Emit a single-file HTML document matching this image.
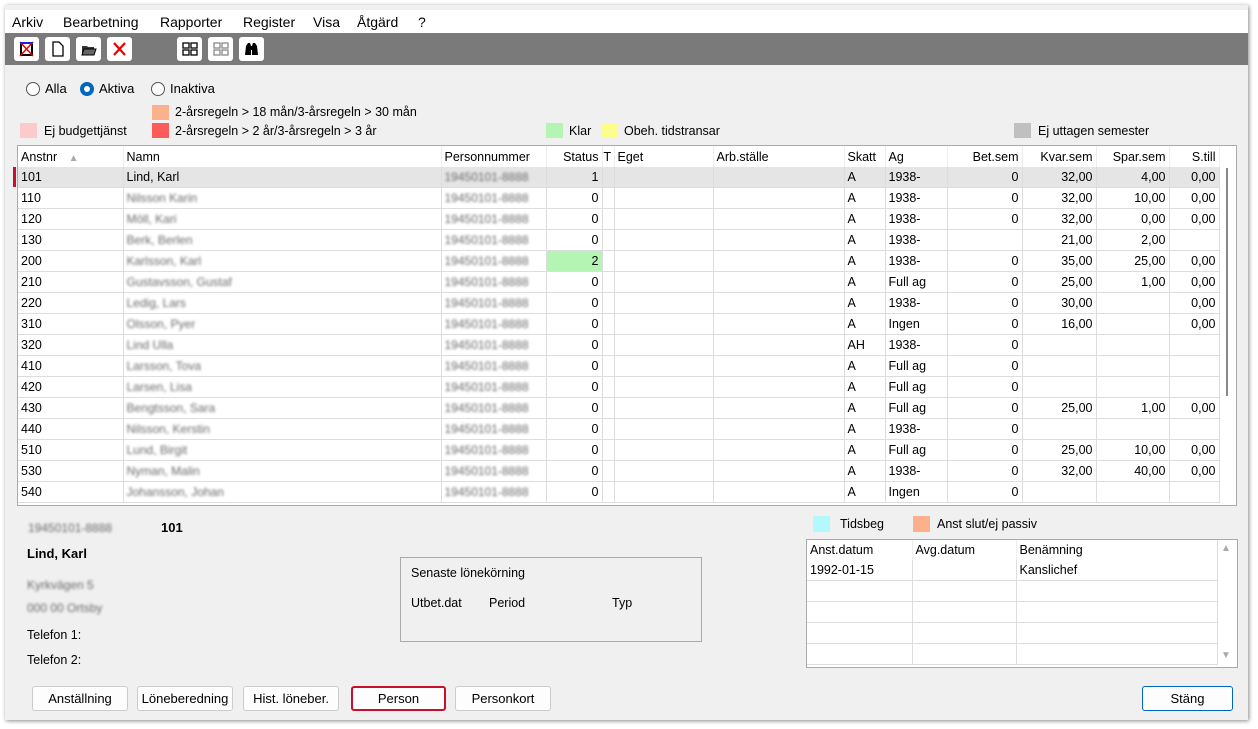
<!DOCTYPE html>
<html><head><meta charset="utf-8"><style>
body{margin:0;width:1258px;height:729px;background:#fff;font-family:"Liberation Sans",sans-serif;font-size:12.5px;color:#000;position:relative;overflow:hidden}
.a{position:absolute}
.win{left:5px;top:5px;width:1243px;height:715px;background:#f0f0f0;box-shadow:1px 1px 4px #888;}
.menu{left:5px;top:10px;width:1243px;height:23px;background:#fff}
.menu span{position:absolute;top:4px;font-size:14px}
.tb{left:5px;top:33px;width:1243px;height:32px;background:#7a7a7a}
.tbb{position:absolute;top:4px;width:25px;height:24px;background:#fff;border-radius:3px}
.sw{position:absolute;width:17px;height:15px}
.grid{left:17px;top:145px;width:1220px;height:361px;background:#fff;border:1px solid #aaa;box-sizing:border-box;overflow:hidden}
table{border-collapse:collapse;table-layout:fixed;font-size:12.5px}
td{height:20px;padding:0 3px;border-right:1px solid #ddd;border-bottom:1px solid #ddd;white-space:nowrap;overflow:hidden}
th{height:21px;font-weight:normal;text-align:left;padding:0 3px;border-right:1px solid #eee;white-space:nowrap}
.r{text-align:right}
.bl{color:#6a6a6a;filter:blur(1.2px);font-size:12px}
.btn{position:absolute;top:686px;height:25px;background:#fdfdfd;border:1px solid #ccc;border-radius:3px;box-sizing:border-box;text-align:center;line-height:23px;font-size:13px}
</style></head><body>
<div class="a win"></div>
<div class="a menu">
<span style="left:7px">Arkiv</span><span style="left:58px">Bearbetning</span><span style="left:155px">Rapporter</span><span style="left:238px">Register</span><span style="left:308px">Visa</span><span style="left:352px">Åtgärd</span><span style="left:413px">?</span>
</div>
<div class="a tb">
<div class="tbb" style="left:9px"><svg width="25" height="24"><rect x="7" y="6" width="11" height="12" fill="#fff" stroke="#000" stroke-width="2"/><path d="M6 5L19 19M19 5L6 19" stroke="#e00" stroke-width="1.5"/><rect x="6" y="5" width="13" height="2" fill="#22c"/></svg></div>
<div class="tbb" style="left:40px"><svg width="25" height="24"><path d="M8 5h6l4 4v10H8z" fill="#fff" stroke="#000" stroke-width="1.3"/></svg></div>
<div class="tbb" style="left:71px"><svg width="25" height="24"><path d="M6 9h5l1 1h6v8H6z" fill="#333"/><path d="M8 12h12l-2 6H6z" fill="#666" stroke="#000"/></svg></div>
<div class="tbb" style="left:102px"><svg width="25" height="24"><path d="M7 6L18 18M18 6L7 18" stroke="#e00" stroke-width="2.2"/></svg></div>
<div class="tbb" style="left:172px"><svg width="25" height="24"><g fill="none" stroke="#000" stroke-width="1.3"><rect x="6" y="6" width="6" height="5"/><rect x="14" y="6" width="6" height="5"/><rect x="6" y="13" width="6" height="5"/><rect x="14" y="13" width="6" height="5"/></g></svg></div>
<div class="tbb" style="left:203px"><svg width="25" height="24"><g fill="none" stroke="#888" stroke-width="1.3"><rect x="6" y="6" width="6" height="5"/><rect x="14" y="6" width="6" height="5"/><rect x="6" y="13" width="6" height="5"/><rect x="14" y="13" width="6" height="5"/></g></svg></div>
<div class="tbb" style="left:234px"><svg width="25" height="24"><path d="M6 18l1-9 2-3h2l1 3v9zM13 18V9l1-3h2l2 3 1 9z" fill="#000"/><rect x="10" y="9" width="5" height="4" fill="#000"/></svg></div>
</div>

<svg class="a" style="left:25px;top:81px" width="16" height="16"><circle cx="8" cy="8" r="6.5" fill="#fff" stroke="#555"/></svg>
<div class="a" style="left:45px;top:81px;font-size:13px">Alla</div>
<svg class="a" style="left:79px;top:81px" width="16" height="16"><circle cx="8" cy="8" r="6.5" fill="#0067c0" stroke="#0067c0"/><circle cx="8" cy="8" r="3" fill="#fff"/></svg>
<div class="a" style="left:99px;top:81px;font-size:13px">Aktiva</div>
<svg class="a" style="left:150px;top:81px" width="16" height="16"><circle cx="8" cy="8" r="6.5" fill="#fff" stroke="#555"/></svg>
<div class="a" style="left:170px;top:81px;font-size:13px">Inaktiva</div>

<div class="sw" style="left:152px;top:105px;background:#fdb08c"></div>
<div class="a" style="left:175px;top:105px">2-årsregeln &gt; 18 mån/3-årsregeln &gt; 30 mån</div>
<div class="sw" style="left:20px;top:123px;background:#fbcaca"></div>
<div class="a" style="left:44px;top:124px">Ej budgettjänst</div>
<div class="sw" style="left:152px;top:123px;background:#fd5a5a"></div>
<div class="a" style="left:175px;top:124px">2-årsregeln &gt; 2 år/3-årsregeln &gt; 3 år</div>
<div class="sw" style="left:546px;top:123px;background:#b4f5b4"></div>
<div class="a" style="left:569px;top:124px">Klar</div>
<div class="sw" style="left:601px;top:123px;background:#fdfd8c"></div>
<div class="a" style="left:624px;top:124px">Obeh. tidstransar</div>
<div class="sw" style="left:1014px;top:123px;background:#c0c0c0"></div>
<div class="a" style="left:1038px;top:124px">Ej uttagen semester</div>

<div class="a grid">
<table style="width:1201px">
<colgroup><col style="width:105px"><col style="width:318px"><col style="width:105px"><col style="width:56px"><col style="width:12px"><col style="width:99px"><col style="width:131px"><col style="width:41px"><col style="width:62px"><col style="width:75px"><col style="width:74px"><col style="width:73px"><col style="width:50px"></colgroup>
<tr><th>Anstnr <span style="color:#aaa;font-size:10px;margin-left:8px">▲</span></th><th>Namn</th><th>Personnummer</th><th class="r">Status</th><th style="padding:0 1px">T</th><th>Eget</th><th>Arb.ställe</th><th>Skatt</th><th>Ag</th><th class="r">Bet.sem</th><th class="r">Kvar.sem</th><th class="r">Spar.sem</th><th class="r">S.till</th></tr>
<tr style="background:#e5e5e5"><td>101</td><td>Lind, Karl</td><td class="bl">19450101-8888</td><td class="r">1</td><td></td><td></td><td></td><td>A</td><td>1938-</td><td class="r">0</td><td class="r">32,00</td><td class="r">4,00</td><td class="r">0,00</td></tr>
<tr><td>110</td><td class="bl">Nilsson Karin</td><td class="bl">19450101-8888</td><td class="r">0</td><td></td><td></td><td></td><td>A</td><td>1938-</td><td class="r">0</td><td class="r">32,00</td><td class="r">10,00</td><td class="r">0,00</td></tr>
<tr><td>120</td><td class="bl">Möll, Kari</td><td class="bl">19450101-8888</td><td class="r">0</td><td></td><td></td><td></td><td>A</td><td>1938-</td><td class="r">0</td><td class="r">32,00</td><td class="r">0,00</td><td class="r">0,00</td></tr>
<tr><td>130</td><td class="bl">Berk, Berlen</td><td class="bl">19450101-8888</td><td class="r">0</td><td></td><td></td><td></td><td>A</td><td>1938-</td><td class="r"></td><td class="r">21,00</td><td class="r">2,00</td><td class="r"></td></tr>
<tr><td>200</td><td class="bl">Karlsson, Karl</td><td class="bl">19450101-8888</td><td class="r" style="background:#b4f5b4">2</td><td></td><td></td><td></td><td>A</td><td>1938-</td><td class="r">0</td><td class="r">35,00</td><td class="r">25,00</td><td class="r">0,00</td></tr>
<tr><td>210</td><td class="bl">Gustavsson, Gustaf</td><td class="bl">19450101-8888</td><td class="r">0</td><td></td><td></td><td></td><td>A</td><td>Full ag</td><td class="r">0</td><td class="r">25,00</td><td class="r">1,00</td><td class="r">0,00</td></tr>
<tr><td>220</td><td class="bl">Ledig, Lars</td><td class="bl">19450101-8888</td><td class="r">0</td><td></td><td></td><td></td><td>A</td><td>1938-</td><td class="r">0</td><td class="r">30,00</td><td class="r"></td><td class="r">0,00</td></tr>
<tr><td>310</td><td class="bl">Olsson, Pyer</td><td class="bl">19450101-8888</td><td class="r">0</td><td></td><td></td><td></td><td>A</td><td>Ingen</td><td class="r">0</td><td class="r">16,00</td><td class="r"></td><td class="r">0,00</td></tr>
<tr><td>320</td><td class="bl">Lind Ulla</td><td class="bl">19450101-8888</td><td class="r">0</td><td></td><td></td><td></td><td>AH</td><td>1938-</td><td class="r">0</td><td></td><td></td><td></td></tr>
<tr><td>410</td><td class="bl">Larsson, Tova</td><td class="bl">19450101-8888</td><td class="r">0</td><td></td><td></td><td></td><td>A</td><td>Full ag</td><td class="r">0</td><td></td><td></td><td></td></tr>
<tr><td>420</td><td class="bl">Larsen, Lisa</td><td class="bl">19450101-8888</td><td class="r">0</td><td></td><td></td><td></td><td>A</td><td>Full ag</td><td class="r">0</td><td></td><td></td><td></td></tr>
<tr><td>430</td><td class="bl">Bengtsson, Sara</td><td class="bl">19450101-8888</td><td class="r">0</td><td></td><td></td><td></td><td>A</td><td>Full ag</td><td class="r">0</td><td class="r">25,00</td><td class="r">1,00</td><td class="r">0,00</td></tr>
<tr><td>440</td><td class="bl">Nilsson, Kerstin</td><td class="bl">19450101-8888</td><td class="r">0</td><td></td><td></td><td></td><td>A</td><td>1938-</td><td class="r">0</td><td></td><td></td><td></td></tr>
<tr><td>510</td><td class="bl">Lund, Birgit</td><td class="bl">19450101-8888</td><td class="r">0</td><td></td><td></td><td></td><td>A</td><td>Full ag</td><td class="r">0</td><td class="r">25,00</td><td class="r">10,00</td><td class="r">0,00</td></tr>
<tr><td>530</td><td class="bl">Nyman, Malin</td><td class="bl">19450101-8888</td><td class="r">0</td><td></td><td></td><td></td><td>A</td><td>1938-</td><td class="r">0</td><td class="r">32,00</td><td class="r">40,00</td><td class="r">0,00</td></tr>
<tr><td>540</td><td class="bl">Johansson, Johan</td><td class="bl">19450101-8888</td><td class="r">0</td><td></td><td></td><td></td><td>A</td><td>Ingen</td><td class="r">0</td><td></td><td></td><td></td></tr>
</table>
<div class="a" style="left:1208px;top:22px;width:2px;height:228px;background:#888"></div>
</div>
<div class="a" style="left:13px;top:167px;width:3px;height:20px;background:#c8102e"></div>

<div class="a bl" style="left:28px;top:521px">19450101-8888</div>
<div class="a" style="left:161px;top:520px;font-weight:bold;font-size:13px">101</div>
<div class="a" style="left:27px;top:546px;font-weight:bold;font-size:13px">Lind, Karl</div>
<div class="a bl" style="left:27px;top:578px">Kyrkvägen 5</div>
<div class="a bl" style="left:27px;top:601px">000 00 Ortsby</div>
<div class="a" style="left:27px;top:628px">Telefon 1:</div>
<div class="a" style="left:27px;top:653px">Telefon 2:</div>

<div class="a" style="left:400px;top:557px;width:302px;height:85px;border:1px solid #aaa;box-sizing:border-box"></div>
<div class="a" style="left:411px;top:566px">Senaste lönekörning</div>
<div class="a" style="left:411px;top:596px">Utbet.dat</div>
<div class="a" style="left:489px;top:596px">Period</div>
<div class="a" style="left:612px;top:596px">Typ</div>

<div class="sw" style="left:813px;top:516px;background:#b4f8fc;height:16px"></div>
<div class="a" style="left:840px;top:517px">Tidsbeg</div>
<div class="sw" style="left:913px;top:516px;background:#fdb08c;height:16px"></div>
<div class="a" style="left:937px;top:517px">Anst slut/ej passiv</div>

<div class="a" style="left:806px;top:539px;width:432px;height:129px;background:#fff;border:1px solid #aaa;box-sizing:border-box;overflow:hidden">
<table style="width:410px">
<colgroup><col style="width:105px"><col style="width:104px"><col style="width:201px"></colgroup>
<tr><td style="border-bottom:0;border-right:1px solid #eee">Anst.datum</td><td style="border-bottom:0;border-right:1px solid #eee">Avg.datum</td><td style="border-bottom:0">Benämning</td></tr>
<tr><td>1992-01-15</td><td></td><td>Kanslichef</td></tr>
<tr><td></td><td></td><td></td></tr><tr><td></td><td></td><td></td></tr><tr><td></td><td></td><td></td></tr><tr><td></td><td></td><td></td></tr>
</table>
<div class="a" style="left:414px;top:3px;color:#aaa;font-size:10px">▲</div>
<div class="a" style="left:414px;top:110px;color:#aaa;font-size:10px">▼</div>
</div>

<div class="btn" style="left:32px;width:96px">Anställning</div>
<div class="btn" style="left:137px;width:96px">Löneberedning</div>
<div class="btn" style="left:243px;width:96px">Hist. löneber.</div>
<div class="btn" style="left:351px;width:95px;border:2px solid #c8102e;line-height:21px">Person</div>
<div class="btn" style="left:455px;width:96px">Personkort</div>
<div class="btn" style="left:1142px;width:91px;border:1px solid #0067c0">Stäng</div>
</body></html>
